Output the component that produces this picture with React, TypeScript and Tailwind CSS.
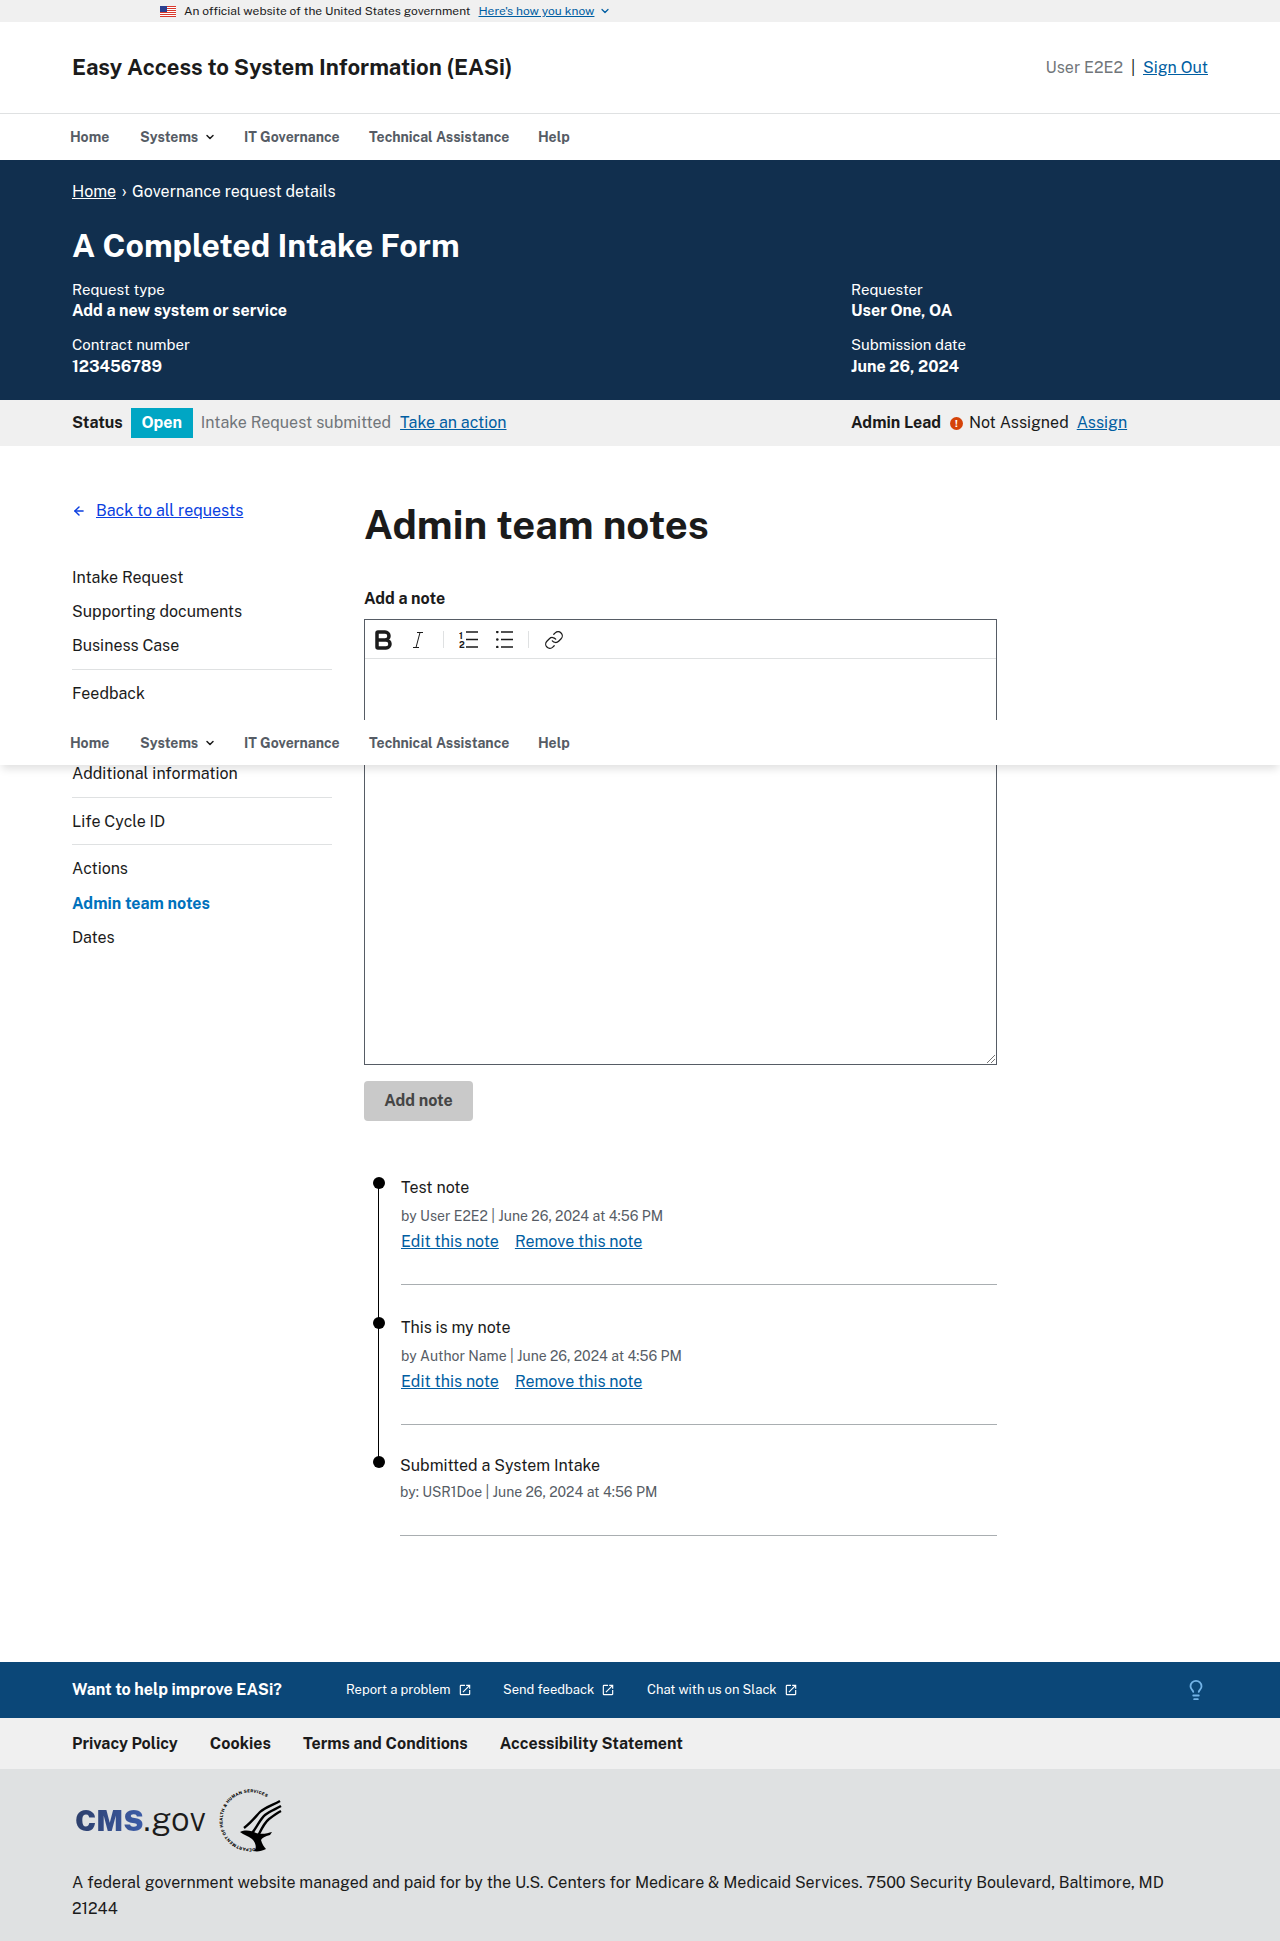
import { Bold, ChevronDown, Lightbulb, Link, ArrowLeft } from "lucide-react";

function NavLinks() {
  return (
    <div className="flex items-center pl-[70px] text-[14px] leading-[20px] font-bold text-[#565c65]">
      <span className="w-[70px]">Home</span>
      <span className="flex w-[104px] items-center">
        Systems
        <ChevronDown className="ml-[6px] h-[12px] w-[12px] text-[#1b1b1b]" strokeWidth={3} />
      </span>
      <span className="w-[125px]">IT Governance</span>
      <span className="w-[169px]">Technical Assistance</span>
      <span>Help</span>
    </div>
  );
}

function LaunchIcon() {
  return (
    <svg viewBox="0 0 24 24" className="ml-[7px] h-[14px] w-[14px] fill-white">
      <path d="M19 19H5V5h7V3H5a2 2 0 0 0-2 2v14a2 2 0 0 0 2 2h14c1.1 0 2-.9 2-2v-7h-2v7zM14 3v2h3.59l-9.83 9.83 1.41 1.41L19 6.41V10h2V3h-7z" />
    </svg>
  );
}

function Flag() {
  return (
    <svg viewBox="0 0 16 11" className="h-[11px] w-[16px]">
      <rect width="16" height="11" fill="#fff" />
      {[0, 2, 4, 6, 8, 10].map((y) => (
        <rect key={y} y={y} width="16" height="1" fill="#d8382c" />
      ))}
      <rect width="7" height="6" fill="#2b3f8f" />
    </svg>
  );
}

function ItalicIcon() {
  return (
    <svg viewBox="0 0 10 16" className="ml-[18px] h-[16px] w-[10px] fill-none stroke-[#1b1b1b]">
      <path d="M4 .5H10M0 15.5H6M7 .5L3 15.5" strokeWidth="1" />
    </svg>
  );
}

function OrderedIcon() {
  return (
    <svg viewBox="0 0 19 17" className="ml-[15px] h-[17px] w-[19px] fill-none stroke-[#1b1b1b]">
      <path d="M7 1H19M7 8.5H19M7 16H19" strokeWidth="1.3" />
      <text x="0" y="7.5" className="fill-[#1b1b1b] stroke-none text-[9px] font-bold">
        1
      </text>
      <text x="0" y="17" className="fill-[#1b1b1b] stroke-none text-[9px] font-bold">
        2
      </text>
    </svg>
  );
}

function BulletIcon() {
  return (
    <svg viewBox="0 0 17 17" className="ml-[18px] h-[17px] w-[17px] fill-[#1b1b1b] stroke-[#1b1b1b]">
      <path d="M5 1H17M5 8.5H17M5 16H17" strokeWidth="1.3" />
      <circle cx="1.3" cy="1" r="1.3" stroke="none" />
      <circle cx="1.3" cy="8.5" r="1.3" stroke="none" />
      <circle cx="1.3" cy="16" r="1.3" stroke="none" />
    </svg>
  );
}

function HhsSeal() {
  return (
    <svg viewBox="0 0 68 68" className="ml-[10px] h-[68px] w-[68px] overflow-visible">
      <defs>
        <path id="seal" d="M39 62 A28 28 0 1 1 52 12.5" />
      </defs>
      <text className="fill-black text-[4.2px] font-extrabold tracking-[0.3px]">
        <textPath href="#seal">DEPARTMENT OF HEALTH &amp; HUMAN SERVICES USA</textPath>
      </text>
      <g transform="translate(2 0)">
        <g fill="none" stroke="#000" strokeWidth="2.4">
          <path d="M26 42 C34 36 38 30 42 26 C47 21 55 19 62 15" />
          <path d="M34 47 C40 40 42 33 47 29 C52 25 58 23 63 20" />
          <path d="M40 50 C43 44 46 37 51 33 C55 30 59 27 63 25" />
        </g>
        <path
          d="M22 46 C28 43 34 45 38 47 C44 49 50 47 54 46 L52 49 C47 50 44 52 43 54 C44 58 46 61 48 63 C44 65 39 66 36 65 C39 62 38 57 34 53 C30 50 26 49 22 46 Z"
          fill="#000"
        />
      </g>
    </svg>
  );
}

function SideLink({ children, active }: { children: string; active?: boolean }) {
  return (
    <div className={`h-[34.4px] text-[16px] leading-[34.4px] ${active ? "font-bold text-[#0071bc]" : "text-[#1b1b1b]"}`}>
      {children}
    </div>
  );
}

function SideRule() {
  return <div className="mt-[5px] mb-[7.1px] h-px bg-[#dfe1e2]" />;
}

function Note({ title, by, actions }: { title: string; by: string; actions?: boolean }) {
  return (
    <div className={`relative border-b border-[#a9aeb1] pt-[1px] ${actions ? "ml-[37px] h-[110px]" : "ml-[36px] h-[83px]"}`}>
      <div className={`absolute h-[12px] w-[12px] rounded-full bg-black ${actions ? "top-[2px] left-[-28px]" : "top-[3px] left-[-27px]"}`} />
      <div className="text-[16px] leading-[24px] text-[#1b1b1b]">{title}</div>
      <div className={`text-[14px] leading-[20px] text-[#565c65] ${actions ? "mt-[6px]" : "mt-[4px]"}`}>{by}</div>
      {actions && (
        <div className="mt-[4px] flex gap-[16px] text-[16px] leading-[24px] text-[#005ea2] underline">
          <span>Edit this note</span>
          <span>Remove this note</span>
        </div>
      )}
    </div>
  );
}

export default function App() {
  return (
    <div className="relative h-[1941px] overflow-hidden bg-white font-['Public_Sans','Inter','Liberation_Sans',sans-serif] text-[#1b1b1b]">
      {/* Gov banner */}
      <div className="flex h-[22px] items-center bg-[#f0f0f0] pl-[160px] text-[12px]">
        <Flag />
        <span className="ml-[8px] text-[#1b1b1b]">An official website of the United States government</span>
        <span className="ml-[8px] text-[#005ea2] underline">Here's how you know</span>
        <ChevronDown className="ml-[5px] h-[12px] w-[12px] text-[#005ea2]" strokeWidth={2.5} />
      </div>

      {/* Header */}
      <div className="flex h-[92px] items-center justify-between border-b border-[#dfe1e2] px-[72px]">
        <div className="text-[22.05px] font-bold">Easy Access to System Information (EASi)</div>
        <div className="text-[16px] text-[#71767a]">
          User E2E2 <span className="mx-[4px] text-[#1b1b1b]">|</span>{" "}
          <span className="text-[#005ea2] underline">Sign Out</span>
        </div>
      </div>
      <div className="flex h-[46px] items-center">
        <NavLinks />
      </div>

      {/* Request summary */}
      <div className="h-[240px] bg-[#112f4e] px-[72px] pt-[20px] text-white">
        <div className="text-[16px] leading-[24px]">
          <span className="underline">Home</span> <span className="mx-[1.5px] text-[19px] leading-[19px]">›</span> Governance request details
        </div>
        <h1 className="mt-[22px] text-[32px] leading-[40px] font-bold">A Completed Intake Form</h1>
        <div className="mt-[13px] grid grid-cols-[779px_1fr] text-[15px] leading-[21px]">
          <div>
            <div>Request type</div>
            <div className="text-[16px] leading-[22px] font-bold">Add a new system or service</div>
            <div className="mt-[12px]">Contract number</div>
            <div className="mt-[1px] text-[16px] leading-[22px] font-bold">123456789</div>
          </div>
          <div>
            <div>Requester</div>
            <div className="text-[16px] leading-[22px] font-bold">User One, OA</div>
            <div className="mt-[12px]">Submission date</div>
            <div className="mt-[1px] text-[16px] leading-[22px] font-bold">June 26, 2024</div>
          </div>
        </div>
      </div>

      {/* Status bar */}
      <div className="grid h-[46px] grid-cols-[779px_1fr] items-center bg-[#f0f0f0] px-[72px] text-[16px]">
        <div className="flex items-center">
          <span className="font-bold">Status</span>
          <span className="ml-[8px] flex h-[30px] w-[62px] items-center justify-center bg-[#00a6c4] font-bold text-white">
            Open
          </span>
          <span className="ml-[8px] text-[#71767a]">Intake Request submitted</span>
          <span className="ml-[9px] text-[#005ea2] underline">Take an action</span>
        </div>
        <div className="flex items-center">
          <span className="font-bold">Admin Lead</span>
          <span className="ml-[9px] flex h-[13px] w-[13px] items-center justify-center rounded-full bg-[#d54309] text-[10px] leading-none font-bold text-white">
            !
          </span>
          <span className="ml-[6px]">Not Assigned</span>
          <span className="ml-[8px] text-[#005ea2] underline">Assign</span>
        </div>
      </div>

      {/* Main */}
      <div className="flex h-[1216px] pl-[72px]">
        <div className="w-[292px] pt-[52px]">
          <div className="flex h-[25px] w-[260px] items-center text-[16px] text-[#0b3fe0]">
            <ArrowLeft className="h-[14px] w-[14px]" strokeWidth={2.5} />
            <span className="ml-[10px] underline">Back to all requests</span>
          </div>
          <div className="mt-[37.5px] w-[260px]">
            <SideLink>Intake Request</SideLink>
            <SideLink>Supporting documents</SideLink>
            <SideLink>Business Case</SideLink>
            <SideRule />
            <SideLink>Feedback</SideLink>
            {/* rest of this group sits under the sticky nav */}
            <div className="h-[46.3px]" />
            <SideLink>Additional information</SideLink>
            <SideRule />
            <SideLink>Life Cycle ID</SideLink>
            <SideRule />
            <SideLink>Actions</SideLink>
            <SideLink active>Admin team notes</SideLink>
            <SideLink>Dates</SideLink>
          </div>
        </div>

        <div className="w-[633px]">
          <h2 className="mt-[54px] text-[40px] leading-[50px] font-bold">Admin team notes</h2>
          <div className="mt-[37px] text-[16px] leading-[24px] font-bold">Add a note</div>
          <div className="relative mt-[8px] h-[446px] border border-[#565c65]">
            <div className="flex h-[39px] items-center border-b border-[#dfe1e2] pt-[1px] pl-[6px] text-[#1b1b1b]">
              <Bold className="h-[24px] w-[24px]" strokeWidth={3.5} />
              <ItalicIcon />
              <div className="ml-[20px] h-[17px] w-px bg-[#dfe1e2]" />
              <OrderedIcon />
              <BulletIcon />
              <div className="ml-[15px] h-[17px] w-px bg-[#dfe1e2]" />
              <Link className="ml-[15px] h-[20px] w-[20px]" strokeWidth={1.5} />
            </div>
            {/* textarea resize grip */}
            <svg viewBox="0 0 10 10" className="absolute right-0 bottom-0 h-[10px] w-[10px] stroke-[#767676]">
              <path d="M1 9L9 1M5 9L9 5" strokeWidth="1" />
            </svg>
          </div>
          <button className="mt-[16px] h-[40px] w-[109px] rounded-[4px] bg-[#c9c9c9] text-[16px] font-bold text-[#454545]">
            Add note
          </button>

          <div className="relative mt-[54px]">
            <div className="absolute top-[8px] left-[14px] h-[282px] w-px bg-black" />
            <Note title="Test note" by="by User E2E2 | June 26, 2024 at 4:56 PM" actions />
            <div className="h-[30px]" />
            <Note title="This is my note" by="by Author Name | June 26, 2024 at 4:56 PM" actions />
            <div className="h-[28px]" />
            <Note title="Submitted a System Intake" by="by: USR1Doe | June 26, 2024 at 4:56 PM" />
          </div>
        </div>
      </div>

      {/* Sticky nav sitting over the content */}
      <div className="absolute top-[720px] right-0 left-0 flex h-[45px] items-center bg-white shadow-[0_6px_8px_-2px_rgba(0,0,0,0.12)]">
        <NavLinks />
      </div>

      {/* Footer */}
      <div className="flex h-[56px] items-center bg-[#0b4778] px-[72px] text-white">
        <span className="w-[274px] text-[16px] font-bold">Want to help improve EASi?</span>
        <span className="flex w-[157px] items-center text-[13px]">
          Report a problem
          <LaunchIcon />
        </span>
        <span className="flex w-[144px] items-center text-[13px]">
          Send feedback
          <LaunchIcon />
        </span>
        <span className="flex items-center text-[13px]">
          Chat with us on Slack
          <LaunchIcon />
        </span>
        <Lightbulb className="mr-[1px] ml-auto h-[22px] w-[22px] text-[#73b3e7]" strokeWidth={2} />
      </div>
      <div className="flex h-[51px] items-center gap-[32px] bg-[#f0f0f0] px-[72px] text-[16px] font-bold">
        <span>Privacy Policy</span>
        <span>Cookies</span>
        <span>Terms and Conditions</span>
        <span>Accessibility Statement</span>
      </div>
      <div className="h-[172px] bg-[#dfe1e2] px-[72px] pt-[17px]">
        <div className="flex items-center">
          <div className="ml-[3px] flex w-[131px] items-baseline leading-[40px]">
            <span className="bg-gradient-to-r from-[#2d3f6b] to-[#3c5ca8] bg-clip-text text-[28.5px] font-black text-transparent">
              CMS
            </span>
            <span className="text-[33px] font-light text-[#1b1b1b]">.gov</span>
          </div>
          <HhsSeal />
        </div>
        <p className="mt-[16px] text-[16px] leading-[25.5px]">
          A federal government website managed and paid for by the U.S. Centers for Medicare &amp; Medicaid Services.
          7500 Security Boulevard, Baltimore, MD 21244
        </p>
      </div>
    </div>
  );
}
